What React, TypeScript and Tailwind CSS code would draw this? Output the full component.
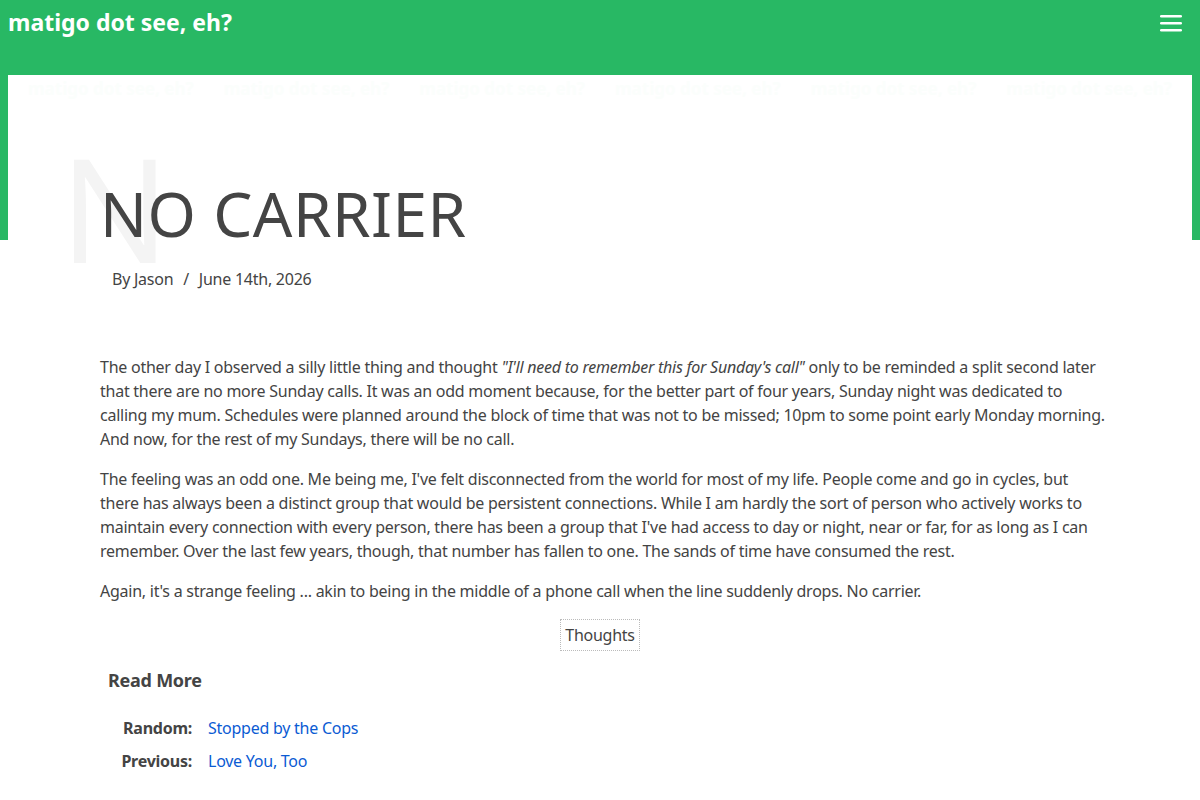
import React from "react";

const font = { fontFamily: '"Noto Sans", "Open Sans", sans-serif' };

function Menu() {
  return (
    <svg width="22" height="18" viewBox="0 0 22 18" className="block">
      <rect x="0" y="1" width="22" height="2.6" rx="1.3" fill="#fff" />
      <rect x="0" y="8" width="22" height="2.6" rx="1.3" fill="#fff" />
      <rect x="0" y="15" width="22" height="2.6" rx="1.3" fill="#fff" />
    </svg>
  );
}

export default function App() {
  const ghost = Array.from({ length: 6 }, (_, i) => i);
  return (
    <div className="relative min-h-[800px] bg-white text-[#444]" style={font}>
      <div className="absolute inset-x-0 top-0 h-[240px] bg-[#28b864]" />
      <header className="relative flex h-[75px] items-start justify-between px-2 pt-[7px]">
        <h1 className="text-[23px] font-bold leading-[30px] text-white">matigo dot see, eh?</h1>
        <button className="mr-[10px] mt-[7px]">
          <Menu />
        </button>
      </header>
      <main className="relative mx-2 bg-white pb-10">
        <div className="flex justify-between px-[20px] pt-[4px] text-[17px] font-bold leading-[20px] text-[#fbfefc]">
          {ghost.map((i) => (
            <span key={i}>matigo dot see, eh?</span>
          ))}
        </div>
        <div className="px-[92px] tracking-[-0.25px]">
          <div className="relative mt-[56px] h-[120px]">
            {/* large drop-letter watermark behind the title */}
            <span className="pointer-events-none absolute left-[-40px] top-[-2px] select-none text-[144px] leading-[108px] tracking-normal text-[#f4f4f4]">
              N
            </span>
            <h2 className="relative pt-[18px] text-[62px] font-normal leading-[80px] tracking-[0.5px] text-[#444]">
              NO CARRIER
            </h2>
          </div>
          <p className="ml-[12px] mt-[-8px] text-[16px] leading-[24px]">
            By Jason <span className="mx-[6px]">/</span> June 14th, 2026
          </p>
          <article className="mt-[64px] space-y-[16px] whitespace-nowrap text-[16px] leading-[24px] text-[#444]">
            <p>
              The other day I observed a silly little thing and thought{" "}
              <em>"I'll need to remember this for Sunday's call"</em> only to be reminded a split second later
              <br />
              that there are no more Sunday calls. It was an odd moment because, for the better part of four years,
              Sunday night was dedicated to
              <br />
              calling my mum. Schedules were planned around the block of time that was not to be missed; 10pm to some
              point early Monday morning.
              <br />
              And now, for the rest of my Sundays, there will be no call.
            </p>
            <p>
              The feeling was an odd one. Me being me, I've felt disconnected from the world for most of my life.
              People come and go in cycles, but
              <br />
              there has always been a distinct group that would be persistent connections. While I am hardly the sort
              of person who actively works to
              <br />
              maintain every connection with every person, there has been a group that I've had access to day or night,
              near or far, for as long as I can
              <br />
              remember. Over the last few years, though, that number has fallen to one. The sands of time have consumed
              the rest.
            </p>
            <p>
              Again, it's a strange feeling ... akin to being in the middle of a phone call when the line suddenly
              drops. No carrier.
            </p>
          </article>
          <div className="mt-[16px] flex justify-center">
            <span className="border border-dotted border-[#bbb] px-[4px] py-[3px] text-[16px] leading-[24px]">
              Thoughts
            </span>
          </div>
          <h3 className="ml-[8px] mt-[16px] text-[18px] font-bold leading-[26px]">Read More</h3>
          <div className="mt-[23px] grid grid-cols-[92px_1fr] gap-x-[16px] gap-y-[9px] text-[16px] leading-[24px]">
            <span className="text-right font-bold">Random:</span>
            <a className="text-[#0b5bd3]" href="#">Stopped by the Cops</a>
            <span className="text-right font-bold">Previous:</span>
            <a className="text-[#0b5bd3]" href="#">Love You, Too</a>
          </div>
        </div>
      </main>
    </div>
  );
}
